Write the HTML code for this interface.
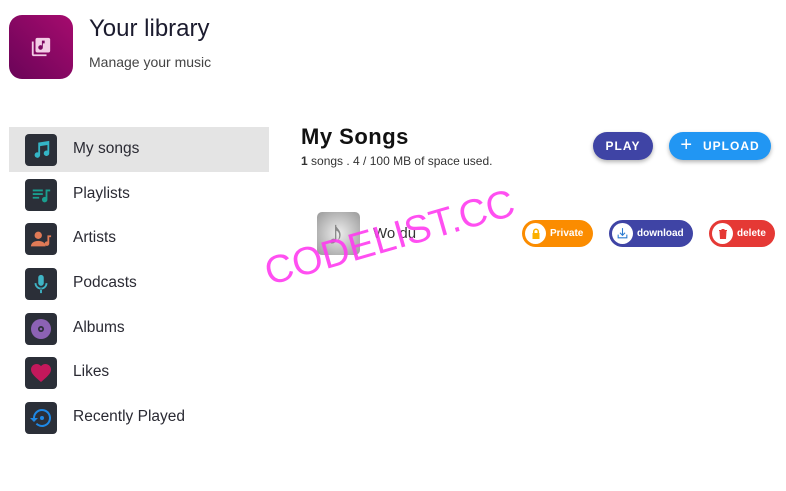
<!DOCTYPE html>
<html><head><meta charset="utf-8"><style>
*{box-sizing:border-box;margin:0;padding:0}
body{width:786px;height:491px;background:#fff;font-family:"Liberation Sans",sans-serif;position:relative;overflow:hidden;color:#222}
.abs{position:absolute}
.logo{left:9px;top:15px;width:64px;height:64px;border-radius:13px;background:linear-gradient(45deg,#6a0458,#a60b6e);display:flex;align-items:center;justify-content:center}
.item{left:9px;width:260px;height:45px}
.item .ic{position:absolute;left:16px;top:7px;width:32px;height:32px;border-radius:4px;background:#2b2f38;display:flex;align-items:center;justify-content:center}
.item .t{position:absolute;left:64px;top:13px;font-size:15.5px;color:#2a2a33}
.btn{border-radius:15px;color:#fff;font-weight:bold;font-size:12px;letter-spacing:1px;display:flex;align-items:center;justify-content:center;box-shadow:0 2px 4px rgba(0,0,0,.3)}
.chip{height:27px;border-radius:14px;color:#fff;font-weight:bold;font-size:10px;display:flex;align-items:center;padding-left:3px}
.chip .c{width:21px;height:21px;border-radius:50%;background:#fff;margin-right:4px;display:flex;align-items:center;justify-content:center}
</style></head><body>
<div class="abs logo"><svg width="22" height="22" viewBox="0 0 24 24"><path d="M4 6H2v14c0 1.1.9 2 2 2h14v-2H4V6z" fill="#f3cde6"/><rect x="6" y="2" width="16" height="16" rx="2" fill="#f3cde6"/><path d="M16 5h-3v5.5a2.5 2.5 0 1 0 1 2V8h2z" fill="#7a0660"/></svg></div>
<div class="abs" style="left:89px;top:15px;font-size:24px;color:#1b1b2e">Your library</div>
<div class="abs" style="left:89px;top:54px;font-size:14px;color:#444">Manage your music</div>

<div class="abs item" style="top:127px;background:#e4e4e4"><div class="ic"><svg width="22" height="22" viewBox="0 0 24 24"><path d="M9 4l12-2v13.5a3 3 0 1 1-2-2.8V6.5l-8 1.3v9.7a3 3 0 1 1-2-2.8z" fill="#34b5c6"/></svg></div><div class="t">My songs</div></div>
<div class="abs item" style="top:172px"><div class="ic"><svg width="22" height="22" viewBox="0 0 24 24"><path d="M3 6h11v2H3zm0 4h11v2H3zm0 4h7v2H3zm14-8h5v2h-3v9a3 3 0 1 1-2-2.8z" fill="#1a9e8f"/></svg></div><div class="t">Playlists</div></div>
<div class="abs item" style="top:216px"><div class="ic"><svg width="22" height="22" viewBox="0 0 24 24"><circle cx="9" cy="8" r="4" fill="#e07a56"/><path d="M1 20c0-4 4-6 8-6s8 2 8 6z" fill="#e07a56"/><path d="M19 8h4v2h-2v7a2.5 2.5 0 1 1-2-2.4z" fill="#e07a56"/></svg></div><div class="t">Artists</div></div>
<div class="abs item" style="top:261px"><div class="ic"><svg width="22" height="22" viewBox="0 0 24 24"><rect x="9" y="2" width="6" height="12" rx="3" fill="#3fb5c6"/><path d="M5 11a7 7 0 0 0 14 0h-2a5 5 0 0 1-10 0zm6 6h2v5h-2z" fill="#3fb5c6"/></svg></div><div class="t">Podcasts</div></div>
<div class="abs item" style="top:306px"><div class="ic"><svg width="24" height="24" viewBox="0 0 24 24"><circle cx="12" cy="12" r="10" fill="#8c62b4"/><circle cx="12" cy="12" r="3" fill="#2b2f38"/><circle cx="12" cy="12" r="1.3" fill="#8c62b4"/></svg></div><div class="t">Albums</div></div>
<div class="abs item" style="top:350px"><div class="ic"><svg width="24" height="24" viewBox="0 0 24 24"><path d="M12 21l-1.5-1.3C5 15 2 12 2 8.5 2 5.5 4.4 3 7.5 3c1.7 0 3.4.8 4.5 2.1C13.1 3.8 14.8 3 16.5 3 19.6 3 22 5.5 22 8.5c0 3.5-3 6.5-8.5 11.2z" fill="#c2185b"/></svg></div><div class="t">Likes</div></div>
<div class="abs item" style="top:395px"><div class="ic"><svg width="24" height="24" viewBox="0 0 24 24"><path d="M13 3a9 9 0 0 0-9 9H1l4 4 4-4H6a7 7 0 1 1 2.1 5l-1.4 1.4A9 9 0 1 0 13 3z" fill="#1e88e5"/><circle cx="13" cy="12" r="2" fill="#1e88e5"/></svg></div><div class="t">Recently Played</div></div>

<div class="abs" style="left:301px;top:124px;font-size:22px;font-weight:bold;color:#111;letter-spacing:.5px">My Songs</div>
<div class="abs" style="left:301px;top:154px;font-size:12px;color:#333"><b>1</b> songs . 4 / 100 MB of space used.</div>
<div class="abs btn" style="left:593px;top:132px;width:60px;height:28px;background:#3f44a5">PLAY</div>
<div class="abs btn" style="left:669px;top:132px;width:102px;height:28px;background:#2196f3"><span style="font-size:20px;font-weight:normal;margin-right:10px;margin-top:-2px">+</span>UPLOAD</div>

<div class="abs" style="left:317px;top:212px;width:43px;height:43px;border-radius:5px;background:radial-gradient(circle,#eee,#999)"><span style="position:absolute;left:10px;top:2px;font-size:34px;color:#888">♪</span></div>
<div class="abs" style="left:373px;top:225px;font-size:15px;color:#333">Wo du</div>
<div class="abs chip" style="left:522px;top:220px;width:71px;background:#fb8c00"><div class="c"><svg width="12" height="12" viewBox="0 0 24 24"><path d="M6 10V7a6 6 0 0 1 12 0v3h1v12H5V10zm3 0h6V7a3 3 0 0 0-6 0z" fill="#fbb000"/></svg></div>Private</div>
<div class="abs chip" style="left:609px;top:220px;width:84px;background:#3f44a5"><div class="c"><svg width="13" height="13" viewBox="0 0 24 24"><path d="M11 2h2v11l3-3 1.4 1.4L12 16.8 6.6 11.4 8 10l3 3zM3 14h2v5h14v-5h2v7H3z" fill="#2b7bd0"/></svg></div>download</div>
<div class="abs chip" style="left:709px;top:220px;width:66px;background:#e53935"><div class="c"><svg width="12" height="12" viewBox="0 0 24 24"><path d="M5 6h14l-1 16H6zM9 2h6v2h5v2H4V4h5z" fill="#e53935"/></svg></div>delete</div>

<div class="abs" style="left:272px;top:251px;font-size:39px;color:#ff3cf0;transform:rotate(-16deg);transform-origin:0 100%;white-space:nowrap;opacity:.9">CODELIST.CC</div>
</body></html>
